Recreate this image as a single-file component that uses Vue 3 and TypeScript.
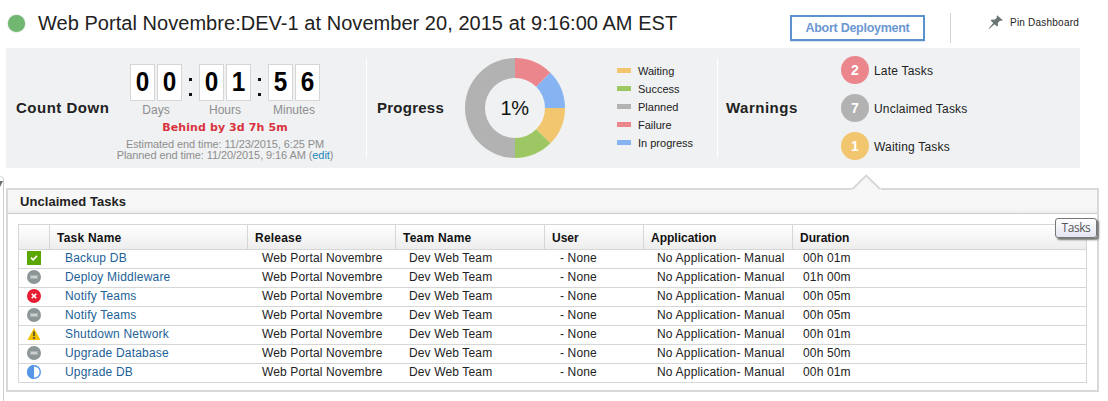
<script setup lang="ts">
type Status = 'success' | 'planned' | 'failure' | 'waiting' | 'progress'

interface Task {
  name: string
  status: Status
  duration: string
}

const clock = [
  { label: 'Days', digits: ['0', '0'] },
  { label: 'Hours', digits: ['0', '1'] },
  { label: 'Minutes', digits: ['5', '6'] },
]

const legend = [
  { label: 'Waiting', tone: 'amber' },
  { label: 'Success', tone: 'green' },
  { label: 'Planned', tone: 'grey' },
  { label: 'Failure', tone: 'red' },
  { label: 'In progress', tone: 'blue' },
]

const warnings = [
  { count: 2, label: 'Late Tasks', tone: 'red' },
  { count: 7, label: 'Unclaimed Tasks', tone: 'grey' },
  { count: 1, label: 'Waiting Tasks', tone: 'amber' },
]

const tasks: Task[] = [
  { name: 'Backup DB', status: 'success', duration: '00h 01m' },
  { name: 'Deploy Middleware', status: 'planned', duration: '01h 00m' },
  { name: 'Notify Teams', status: 'failure', duration: '00h 05m' },
  { name: 'Notify Teams', status: 'planned', duration: '00h 05m' },
  { name: 'Shutdown Network', status: 'waiting', duration: '00h 01m' },
  { name: 'Upgrade Database', status: 'planned', duration: '00h 50m' },
  { name: 'Upgrade DB', status: 'progress', duration: '00h 01m' },
]
</script>

<template>
  <div class="page">
    <div class="rail"><i class="rail-tab"></i></div>
    <header class="top">
      <span class="dot"></span>
      <h1>Web Portal Novembre:DEV-1 at November 20, 2015 at 9:16:00 AM EST</h1>
      <button class="abort">Abort Deployment</button>
      <span class="split"></span>
      <svg class="pin" width="16" height="16" viewBox="0 0 16 16">
        <path d="M9.2 1.2 L14.8 6.3 L13.2 6.9 L12.2 6.6 L9.8 9 L10 11.5 L9 12.5 L6.5 10.2 L1 15 L0.7 14.6 L5.2 8.9 L2.7 6.5 L3.8 5.5 L6.6 5.8 L9 3.5 L8.6 2.6 Z" fill="#6b7475" />
      </svg>
      <a class="pin-label">Pin Dashboard</a>
    </header>

    <section class="summary">
      <div class="countdown">
        <h2>Count Down</h2>
        <div class="timer">
          <div class="clock">
            <template v-for="(unit, i) in clock" :key="unit.label">
              <span v-if="i" class="colon"><i></i><i></i></span>
              <div class="unit">
                <div class="digits"><b v-for="(d, k) in unit.digits" :key="k"><span>{{ d }}</span></b></div>
                <span class="unit-label">{{ unit.label }}</span>
              </div>
            </template>
          </div>
          <p class="behind">Behind by 3d 7h 5m</p>
          <p class="eta">Estimated end time: 11/23/2015, 6:25 PM</p>
          <p class="eta planned">Planned end time: 11/20/2015, 9:16 AM (<a>edit</a>)</p>
        </div>
      </div>

      <div class="progress">
        <h2>Progress</h2>
        <svg class="donut" width="100" height="100" viewBox="-50 -50 100 100">
          <path d="M0 50 A50 50 0 0 1 0 -50 V-30 A30 30 0 0 0 0 30 Z" fill="#b2b2b2" />
          <path d="M0 -50 A50 50 0 0 1 35.36 -35.36 L21.21 -21.21 A30 30 0 0 0 0 -30 Z" fill="#eb868d" />
          <path d="M35.36 -35.36 A50 50 0 0 1 50 0 H30 A30 30 0 0 0 21.21 -21.21 Z" fill="#86b4f3" />
          <path d="M50 0 A50 50 0 0 1 35.36 35.36 L21.21 21.21 A30 30 0 0 0 30 0 Z" fill="#f1c66f" />
          <path d="M35.36 35.36 A50 50 0 0 1 0 50 V30 A30 30 0 0 0 21.21 21.21 Z" fill="#9dc763" />
          <text x="-0.5" y="7" text-anchor="middle">1%</text>
        </svg>
        <ul class="legend">
          <li v-for="item in legend" :key="item.label"><i :class="item.tone"></i>{{ item.label }}</li>
        </ul>
      </div>

      <div class="warnings">
        <h2>Warnings</h2>
        <ul>
          <li v-for="w in warnings" :key="w.label">
            <b :class="w.tone">{{ w.count }}</b><span>{{ w.label }}</span>
          </li>
        </ul>
      </div>
    </section>

    <section class="panel">
      <svg class="notch" width="29" height="16" viewBox="0 0 29 16">
        <path d="M0 16 V15 L14.5 1.5 L29 15 V16 Z" fill="#f7f7f7" />
        <path d="M0.5 15 L14.2 1.6 L28 15" fill="none" stroke="#d7d7d7" stroke-width="2" />
      </svg>
      <h3>Unclaimed Tasks</h3>
      <table>
        <colgroup>
          <col class="c0" /><col class="c1" /><col class="c2" /><col class="c3" />
          <col class="c4" /><col class="c5" /><col class="c6" />
        </colgroup>
        <thead>
          <tr>
            <th></th>
            <th class="wide">Task Name</th>
            <th class="wide">Release</th>
            <th class="wide">Team Name</th>
            <th>User</th>
            <th>Application</th>
            <th>Duration</th>
          </tr>
        </thead>
        <tbody>
          <tr v-for="(t, i) in tasks" :key="i">
            <td class="status">
              <svg width="14" height="14" viewBox="0 0 14 14">
                <template v-if="t.status === 'success'">
                  <rect width="14" height="14" fill="#5aa700" />
                  <path d="M4 6.7 L6.1 8.8 L10 4.9" fill="none" stroke="#fff" stroke-width="1.7" />
                </template>
                <template v-else-if="t.status === 'planned'">
                  <circle cx="7" cy="7" r="7" fill="#8c9696" />
                  <rect x="3" y="5" width="8" height="4" fill="#a9b0b0" />
                  <rect x="4" y="6" width="6" height="2" fill="#cdd1d1" />
                </template>
                <template v-else-if="t.status === 'failure'">
                  <circle cx="7" cy="7" r="7" fill="#e71d32" />
                  <path d="M4.7 4.7 L9.3 9.3 M9.3 4.7 L4.7 9.3" stroke="#fff" stroke-width="1.6" />
                </template>
                <template v-else-if="t.status === 'waiting'">
                  <path d="M7 1 L13.5 13 H0.5 Z" fill="#efc100" />
                  <path d="M7 4.5 V9 M7 10 V12" stroke="#5b5336" stroke-width="1.8" />
                </template>
                <template v-else>
                  <circle cx="7" cy="7" r="6.3" fill="#fff" stroke="#5596e6" stroke-width="1.4" />
                  <path d="M7 0 A7 7 0 0 0 7 14 Z" fill="#5596e6" />
                </template>
              </svg>
            </td>
            <td class="name"><a>{{ t.name }}</a></td>
            <td class="release">Web Portal Novembre</td>
            <td class="team">Dev Web Team</td>
            <td class="user">- None</td>
            <td class="app">No Application- Manual</td>
            <td class="duration">{{ t.duration }}</td>
          </tr>
        </tbody>
      </table>
      <div class="tooltip">Tasks</div>
    </section>
  </div>
</template>

<style>
html, body { background: #fff; overflow: hidden; }
</style>

<style scoped>
* { box-sizing: border-box; }
.page {
  position: relative;
  width: 1108px;
  height: 401px;
  overflow: hidden;
  padding-left: 6px;
  font-family: "Liberation Sans", Arial, sans-serif;
  font-size: 12px;
  color: #222;
  white-space: nowrap;
}
h1, h2, h3, p, ul { margin: 0; padding: 0; }
ul { list-style: none; }
.rail {
  position: absolute;
  left: 0;
  top: 176px;
  width: 4px;
  height: 225px;
  border-right: 1px solid #cdcdcd;
  border-top: 1px solid #ddd;
  border-top-right-radius: 4px;
}
.rail-tab {
  position: absolute;
  left: 0;
  top: 4px;
  border-top: 6px solid #667070;
  border-right: 3px solid transparent;
  width: 3px;
}
.top { display: flex; align-items: flex-start; height: 48px; }
.dot {
  width: 17px;
  height: 17px;
  margin: 15px 0 0 2px;
  border-radius: 50%;
  background: #70b771;
  box-shadow: 0 0 1px 0.5px #c5d4c6;
}
h1 {
  width: 641px;
  margin: 11px 0 0 13px;
  font-size: 20px;
  line-height: 24px;
  font-weight: 400;
  letter-spacing: 0.04px;
}
.abort {
  width: 135px;
  height: 26px;
  margin: 15px 0 0 111px;
  padding: 0;
  border: 2px solid #5b92cd;
  background: #fff;
  box-shadow: 0 1px 1px #dde5ee;
  color: #6b97d2;
  font: bold 12.5px/22px "Liberation Sans", Arial, sans-serif;
  letter-spacing: -0.27px;
}
.split { width: 1px; height: 30px; margin: 13px 0 0 25px; background: #d2d2d2; }
.pin { margin: 14px 0 0 37px; }
.pin-label {
  margin: 16px 0 0 6px;
  font: 10px/13px "Liberation Sans", Arial, sans-serif;
  letter-spacing: 0.22px;
}
.summary { display: flex; width: 1074px; height: 120px; background: #eff1f2; }
h2 { font-size: 15px; line-height: 18px; font-weight: bold; letter-spacing: 0.5px; }
.countdown { display: flex; width: 360px; }
.countdown h2 { width: 100px; margin: 51px 0 0 10px; }
.timer { width: 218px; padding-top: 16px; text-align: center; }
.clock { display: flex; justify-content: center; height: 55px; }
.unit { width: 52px; }
.digits { display: flex; gap: 2px; }
.digits b {
  width: 25px;
  height: 37px;
  border: 1px solid #d5d6d7;
  background: #fff;
  color: #000;
  font-size: 27px;
  line-height: 34px;
}
.digits span { display: block; transform: scaleX(0.9); }
.colon {
  display: flex;
  flex-direction: column;
  justify-content: space-between;
  align-items: center;
  width: 15px;
  margin: 14px 1px 0;
  height: 18px;
}
.colon i { width: 3px; height: 3px; background: #111; }
.unit-label { display: block; color: #8e8e8e; line-height: 14px; margin-top: 2px; }
.behind {
  font: bold 11px/14px "DejaVu Sans", Verdana, sans-serif;
  color: #d9333f;
  letter-spacing: 0.1px;
  height: 18px;
  margin-top: 2px;
}
.eta { font-size: 11px; line-height: 11px; color: #8e8e8e; letter-spacing: -0.09px; }
.eta a { color: #1b87b8; }
.progress, .warnings { position: relative; display: flex; }
.progress::before, .warnings::before {
  content: "";
  width: 1px;
  height: 100px;
  margin-top: 10px;
  background: #fff;
}
.progress { width: 351px; }
.progress h2 { width: 88px; margin: 51px 0 0 10px; letter-spacing: 0.25px; }
.donut { margin-top: 10px; }
.donut text { font-size: 20px; letter-spacing: -0.5px; fill: #111; }
.legend { margin: 14px 0 0 52px; font-size: 11px; line-height: 18px; }
.legend li { display: flex; align-items: center; height: 18px; }
.legend i { width: 14px; height: 5px; margin: -1px 7px 0 0; }
.amber { background: #f1c66f; }
.green { background: #9dc763; }
.grey { background: #b2b2b2; }
.red { background: #eb868d; }
.blue { background: #86b4f3; }
.warnings h2 { width: 115px; margin: 51px 0 0 8px; }
.warnings ul { margin-top: 8px; }
.warnings li { display: flex; align-items: center; height: 28px; margin-bottom: 10px; line-height: 28px; }
.warnings b {
  width: 28px;
  height: 28px;
  margin-right: 5px;
  border-radius: 50%;
  color: #fff;
  font-size: 14px;
  text-align: center;
}
.warnings span { padding-top: 2px; letter-spacing: 0.2px; }
.panel {
  position: relative;
  width: 1093px;
  height: 204px;
  margin-top: 20px;
  border: 2px solid #d9d9d9;
}
.notch { position: absolute; left: 844px; top: -16px; }
h3 {
  height: 24px;
  padding-left: 12px;
  background: linear-gradient(#f7f7f7 80%, #eee);
  border-bottom: 1px solid #ccc;
  font-size: 13px;
  line-height: 23px;
  letter-spacing: 0.06px;
}
table {
  table-layout: fixed;
  width: 1069px;
  margin: 10px 0 0 10px;
  border-collapse: separate;
  border-spacing: 0;
  border: 1px solid #d6d6d6;
  border-bottom: 0;
}
.c0 { width: 31px; }
.c1 { width: 198px; }
.c2 { width: 148px; }
.c3 { width: 149px; }
.c4 { width: 99px; }
.c5 { width: 149px; }
.c6 { width: 293px; }
th {
  height: 25px;
  padding: 2px 0 0 7px;
  text-align: left;
  line-height: 22px;
  color: #111;
  background: linear-gradient(#fff, #ededed);
  border-bottom: 1px solid #d6d6d6;
  border-right: 1px solid #d6d6d6;
}
.wide { letter-spacing: 0.22px; }
th:last-child { border-right: 0; }
td { height: 19px; padding: 0 0 2px; line-height: 16px; letter-spacing: 0.14px; border-bottom: 1px solid #d6d6d6; }
.status { padding-left: 8px; }
.status svg { display: block; }
.name { padding-left: 15px; letter-spacing: 0.2px; }
.name a { color: #1d5f97; }
.release { padding-left: 14px; }
.team { padding-left: 13px; }
.user { padding-left: 15px; }
.app { padding-left: 13px; letter-spacing: 0.19px; }
.duration { padding-left: 10px; }
.tooltip {
  position: absolute;
  left: 1047px;
  top: 28px;
  width: 42px;
  height: 20px;
  border: 1px solid #767676;
  border-radius: 3px;
  background: linear-gradient(#fff, #e4e5f0);
  box-shadow: 2px 2px 2px #777;
  color: #575757;
  font: 12px/18px "Open Sans", "Noto Sans", sans-serif;
  letter-spacing: -0.45px;
  text-align: center;
}
</style>
